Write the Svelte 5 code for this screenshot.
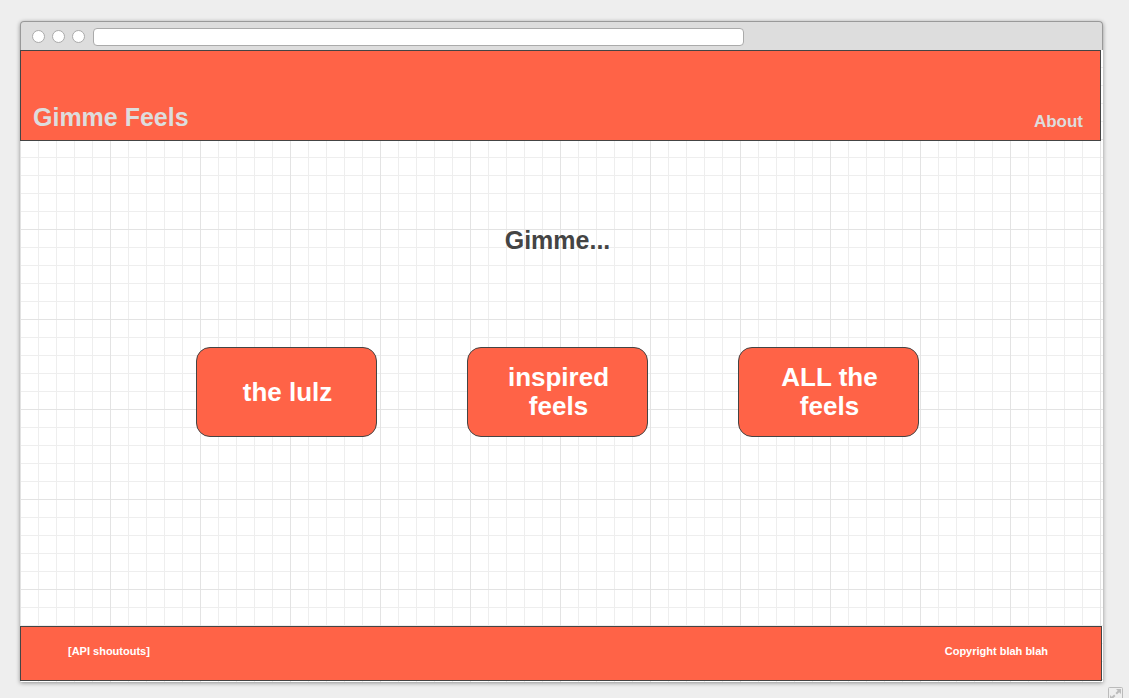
<script>
  const choices = ['the lulz', 'inspired feels', 'ALL the feels'];
  let address = $state('');
</script>

<div class="page">
  <div class="browser">
    <div class="toolbar">
      <span class="dot"></span>
      <span class="dot"></span>
      <span class="dot"></span>
      <input class="address" type="text" aria-label="Address" bind:value={address} />
    </div>

    <div class="canvas">
      <header>
        <h1>Gimme Feels</h1>
        <a class="about" href="#about">About</a>
      </header>

      <main>
        <h2>Gimme...</h2>
        <div class="choices">
          {#each choices as choice}
            <button type="button"><span>{choice}</span></button>
          {/each}
        </div>
      </main>

      <footer>
        <a href="#api">[API shoutouts]</a>
        <span>Copyright blah blah</span>
      </footer>
    </div>
  </div>

  <button class="resize" type="button" aria-label="Resize">
    <svg width="15" height="15" viewBox="0 0 15 15" fill="none" stroke="#bbb">
      <rect x="0.5" y="0.5" width="14" height="14" rx="1" />
      <path d="M4 11 L6.8 8.2 M8.2 6.8 L11 4" stroke-width="2" />
      <path d="M8 2 H13 V7 Z M2 8 V13 H7 Z" fill="#bbb" stroke="none" />
    </svg>
  </button>
</div>

<style>
  :global(body) {
    background: #eee;
  }

  .page {
    box-sizing: border-box;
    position: relative;
    display: flex;
    height: 100vh;
    padding: 21px 26px 16px 20px;
    overflow: hidden;
    font-family: "Liberation Sans", Arial, Helvetica, sans-serif;
    font-weight: bold;
  }

  .browser {
    flex: 1;
    display: flex;
    flex-direction: column;
    border-radius: 4px 4px 0 0;
    box-shadow: 0 1px 4px rgba(0, 0, 0, 0.4);
  }

  .toolbar {
    box-sizing: border-box;
    display: flex;
    align-items: center;
    gap: 7px;
    height: 29px;
    padding: 1px 11px 0;
    background: #ddd;
    border: 1px solid #999;
    border-bottom: 0;
    border-radius: 4px 4px 0 0;
  }

  .dot {
    box-sizing: border-box;
    width: 13px;
    height: 13px;
    background: #fff;
    border: 1px solid #aaa;
    border-radius: 50%;
  }

  .address {
    box-sizing: border-box;
    width: 61.5%;
    height: 18px;
    margin-left: 1px;
    padding: 0 6px;
    background: #fff;
    border: 1px solid #aaa;
    border-radius: 4px;
    outline: 0;
    font: 12px "Liberation Sans", Arial, sans-serif;
  }

  .canvas {
    flex: 1;
    display: flex;
    flex-direction: column;
    padding-bottom: 1px;
    background-color: #fff;
    background-image:
      linear-gradient(to right, #e3e3e3 1px, transparent 1px),
      linear-gradient(to bottom, #e3e3e3 1px, transparent 1px),
      linear-gradient(to right, #eee 1px, transparent 1px),
      linear-gradient(to bottom, #eee 1px, transparent 1px);
    background-size: 90px 90px, 90px 90px, 18px 18px, 18px 18px;
    background-position: 0 -1px;
  }

  header,
  footer {
    box-sizing: border-box;
    display: flex;
    justify-content: space-between;
    background: #ff6347;
    border: 1px solid #444;
  }

  header {
    align-items: flex-end;
    height: 91px;
    margin-right: 2px;
    padding: 0 17px 8px 12px;
    color: #ddd;
  }

  h1,
  h2 {
    margin: 0;
    font-size: 25px;
    line-height: 29px;
  }

  a {
    color: inherit;
    text-decoration: none;
  }

  .about {
    font-size: 17px;
    line-height: 20px;
  }

  main {
    flex: 1;
    display: flex;
    flex-direction: column;
    align-items: center;
    gap: 92px;
    padding: 85px 8px 0 0;
    color: #444;
  }

  .choices {
    display: flex;
    gap: 90px;
  }

  .choices button {
    box-sizing: border-box;
    display: flex;
    align-items: center;
    justify-content: center;
    width: 181px;
    height: 90px;
    padding: 0 35px 0 37px;
    background: #ff6347;
    border: 1px solid #444;
    border-radius: 14px;
    color: #fff;
    font: bold 26px/29px "Liberation Sans", Arial, Helvetica, sans-serif;
  }

  footer {
    height: 55px;
    margin-right: 1px;
    padding: 16px 53px 0 47px;
    color: #fff;
    font-size: 11px;
    line-height: 16px;
  }

  .resize {
    position: absolute;
    right: 6px;
    bottom: -4px;
    display: flex;
    padding: 0;
    background: none;
    border: 0;
  }
</style>
